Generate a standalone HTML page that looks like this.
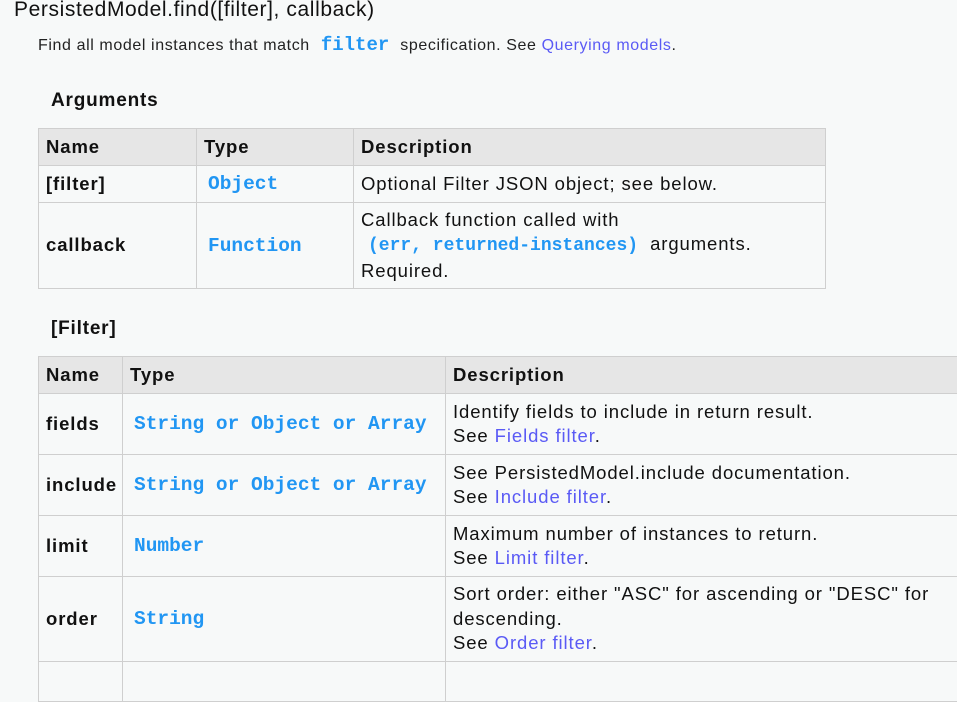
<!DOCTYPE html>
<html><head><meta charset="utf-8"><style>
*{margin:0;padding:0;box-sizing:border-box}
body{width:957px;height:664px;overflow:hidden;background:#f7f9f9;font-family:"Liberation Sans",sans-serif;color:#111;position:relative}
.a{position:absolute;white-space:nowrap}
code{font-family:"Liberation Mono",monospace;color:#2196f3;font-size:19.5px;font-weight:bold;letter-spacing:0}
a{color:#5a5af5;text-decoration:none}
table{position:absolute;border-collapse:collapse;font-size:18.5px;line-height:24.5px;table-layout:fixed;letter-spacing:0.9px}
td,th{border:1px solid #cfcfcf;padding:0 7px;text-align:left;vertical-align:middle;white-space:nowrap}
th{background:#e6e6e6;font-weight:bold}
td.n{font-weight:bold}
</style></head><body>
<div class="a" style="left:14px;top:-4px;font-size:21px;line-height:28px;letter-spacing:0.6px">PersistedModel.find([filter], callback)</div>
<div class="a" style="left:38px;top:34px;font-size:16px;line-height:22px;color:#222;letter-spacing:0.6px">Find all model instances that match <code style="font-size:19px;margin:0 6px">filter</code> specification. See <a>Querying models</a>.</div>
<div class="a" style="left:51px;top:89px;font-size:19px;font-weight:bold;line-height:24px;letter-spacing:0.8px">Arguments</div>
<table style="left:38px;top:128px;width:787px">
<colgroup><col style="width:158px"><col style="width:157px"><col style="width:472px"></colgroup>
<tr style="height:37px"><th>Name</th><th>Type</th><th>Description</th></tr>
<tr style="height:37px"><td class="n">[filter]</td><td><code style="margin-left:4px">Object</code></td><td>Optional Filter JSON object; see below.</td></tr>
<tr style="height:86px"><td class="n">callback</td><td><code style="margin-left:4px">Function</code></td><td>Callback function called with<br><code style="font-size:18px;margin-left:7px;margin-right:6px">(err, returned-instances)</code> arguments.<br>Required.</td></tr>
</table>
<div class="a" style="left:51px;top:317px;font-size:19px;font-weight:bold;line-height:24px;letter-spacing:0.8px">[Filter]</div>
<table style="left:38px;top:356px;width:960px">
<colgroup><col style="width:84px"><col style="width:323px"><col style="width:553px"></colgroup>
<tr style="height:37px"><th>Name</th><th>Type</th><th>Description</th></tr>
<tr style="height:61px"><td class="n">fields</td><td><code style="margin-left:4px">String or Object or Array</code></td><td>Identify fields to include in return result.<br>See <a>Fields filter</a>.</td></tr>
<tr style="height:61px"><td class="n">include</td><td><code style="margin-left:4px">String or Object or Array</code></td><td>See PersistedModel.include documentation.<br>See <a>Include filter</a>.</td></tr>
<tr style="height:61px"><td class="n">limit</td><td><code style="margin-left:4px">Number</code></td><td>Maximum number of instances to return.<br>See <a>Limit filter</a>.</td></tr>
<tr style="height:85px"><td class="n">order</td><td><code style="margin-left:4px">String</code></td><td>Sort order: either "ASC" for ascending or "DESC" for<br>descending.<br>See <a>Order filter</a>.</td></tr>
<tr style="height:40px"><td></td><td></td><td></td></tr>
</table>
</body></html>
